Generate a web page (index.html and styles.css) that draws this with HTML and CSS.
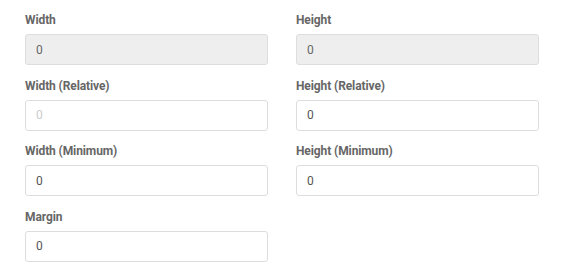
FILE: index.html
```html
<!DOCTYPE html>
<html>
  <head>
    <meta charset="UTF-8">
    <title>Size</title>
    <link rel="stylesheet" href="styles.css">
  </head>
  <body>
    <form class="size-form">
      <div class="form-group">
        <label for="width">Width</label>
        <input type="text" id="width" class="form-control" value="0" disabled>
      </div>
      <div class="form-group">
        <label for="height">Height</label>
        <input type="text" id="height" class="form-control" value="0" disabled>
      </div>
      <div class="form-group">
        <label for="width-rel">Width (Relative)</label>
        <input type="text" id="width-rel" class="form-control" placeholder="0">
      </div>
      <div class="form-group">
        <label for="height-rel">Height (Relative)</label>
        <input type="text" id="height-rel" class="form-control" value="0">
      </div>
      <div class="form-group">
        <label for="width-min">Width (Minimum)</label>
        <input type="text" id="width-min" class="form-control" value="0">
      </div>
      <div class="form-group">
        <label for="height-min">Height (Minimum)</label>
        <input type="text" id="height-min" class="form-control" value="0">
      </div>
      <div class="form-group">
        <label for="margin">Margin</label>
        <input type="text" id="margin" class="form-control" value="0">
      </div>
    </form>
  </body>
</html>
```

FILE: styles.css
```css
body {
  margin: 0;
  padding: 13px 25px 0;
  font-family: Roboto, "Liberation Sans", sans-serif;
  background-color: #fff;
}

.size-form {
  width: 514px;
  display: grid;
  grid-template-columns: 1fr 1fr;
  column-gap: 28px;
}

.form-group {
  margin-bottom: 13.67px;
}

.form-group label {
  display: block;
  font-size: 12px;
  font-weight: bold;
  line-height: 15px;
  letter-spacing: -0.1px;
  color: #666;
  margin-bottom: 6px;
}

.form-control {
  display: block;
  width: 100%;
  height: 31px;
  box-sizing: border-box;
  padding: 0 10px;
  font-family: inherit;
  font-size: 12px;
  color: #555;
  background-color: #fff;
  border: 1px solid #ddd;
  border-radius: 3px;
  outline: none;
}

.form-control:disabled {
  background-color: #eee;
  color: #666;
}

.form-control::placeholder {
  color: #ccc;
}
```
